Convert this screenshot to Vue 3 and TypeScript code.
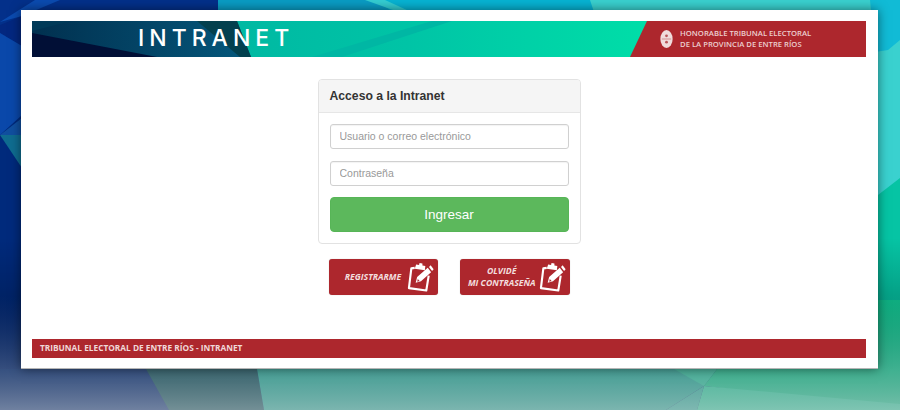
<script setup lang="ts">
const bgShapes = [
  { points: '0,0 900,0 900,410 0,410', fill: '#002a7c' },
  { points: '0,0 220,0 218,30 22,30 0,38', fill: '#03308a' },
  { points: '0,22 35,0 60,0 22,16', fill: '#0b4bb0' },
  { points: '0,25 22,16 22,46 0,33', fill: '#03277f' },
  { points: '0,33 22,46 22,115 0,135', fill: '#0a48aa' },
  { points: '0,135 22,118 22,135', fill: '#104f9f' },
  { points: '0,135 22,135 22,168', fill: '#0f6c90' },
  { points: '218,0 380,0 420,30 218,30', fill: '#0a9cc4' },
  { points: '375,0 595,0 600,30 420,30', fill: '#07b3d3' },
  { points: '365,0 385,0 420,16 410,16', fill: '#34cdd2' },
  { points: '590,0 900,0 900,200 878,220 878,30 600,30', fill: '#3ad1cf' },
  { points: '870,0 900,0 900,40 888,50 875,52', fill: '#11bbd6' },
  { points: '878,195 900,178 900,300 878,300', fill: '#06c4a4' },
  { points: '878,300 900,300 900,410 878,410', fill: '#10d49c' },
  { points: '0,369 146,369 169,410 0,410', fill: '#002e80' },
  { points: '146,369 257,369 264,410 169,410', fill: '#0a5566' },
  { points: '257,369 717,369 704,386 666,410 264,410', fill: '#1fb8a8' },
  { points: '704,386 697,410 666,410', fill: '#28bfae' },
  { points: '674,369 704,386 717,369', fill: '#25d4ae' },
  { points: '717,369 900,369 900,410 704,386', fill: '#10d49c' },
  { points: '704,386 900,404 900,410 697,410', fill: '#28e0b0' },
]

const footerText = 'TRIBUNAL ELECTORAL DE ENTRE RÍOS - INTRANET'
</script>

<template>
  <div class="page">
    <svg class="backdrop" viewBox="0 0 900 410" aria-hidden="true">
      <defs>
        <linearGradient id="fade" x1="0" y1="0" x2="0" y2="1">
          <stop offset="0.58" stop-color="#000" stop-opacity="0" />
          <stop offset="0.72" stop-color="#000" stop-opacity="0.18" />
          <stop offset="0.9" stop-color="#808080" stop-opacity="0.42" />
          <stop offset="1" stop-color="#b4b4b4" stop-opacity="0.62" />
        </linearGradient>
      </defs>
      <polygon v-for="(s, i) in bgShapes" :key="i" :points="s.points" :fill="s.fill" />
      <rect width="900" height="410" fill="url(#fade)" />
    </svg>

    <main class="sheet">
      <header class="banner">
        <svg class="banner-art" viewBox="0 0 834 36" preserveAspectRatio="none" aria-hidden="true">
          <defs>
            <linearGradient id="mint" x1="0" y1="0" x2="1" y2="0">
              <stop offset="0" stop-color="#00ab9e" />
              <stop offset="0.45" stop-color="#00c4a6" />
              <stop offset="0.75" stop-color="#00dfa8" />
              <stop offset="1" stop-color="#00d496" />
            </linearGradient>
            <linearGradient id="navy" x1="0" y1="0" x2="1" y2="0">
              <stop offset="0" stop-color="#01304f" />
              <stop offset="1" stop-color="#05587c" />
            </linearGradient>
          </defs>
          <rect width="834" height="36" fill="url(#mint)" />
          <polygon points="280,36 400,0 420,0 310,36" fill="#00b7a4" />
          <polygon points="0,0 205,0 219,36 0,36" fill="url(#navy)" />
          <polygon points="0,12 125,36 0,36" fill="#010f36" />
          <polygon points="0,0 40,0 0,10" fill="#013a58" />
          <polygon points="165,0 205,0 219,36 208,36" fill="#03404e" />
        </svg>
        <h1 class="brand">INTRANET</h1>
        <div class="court">
          <svg class="seal" viewBox="0 0 14 20" aria-hidden="true">
            <ellipse cx="7" cy="10" rx="6.6" ry="9.6" fill="#f0dcdc" />
            <circle cx="7" cy="6.6" r="1.5" fill="#b9575b" />
            <circle cx="7" cy="13.4" r="1.5" fill="#b9575b" />
            <rect x="2" y="9.7" width="10" height="0.6" fill="#b9575b" />
          </svg>
          <p>HONORABLE TRIBUNAL ELECTORAL<br />DE LA PROVINCIA DE ENTRE RÍOS</p>
        </div>
      </header>

      <section class="panel">
        <h2>Acceso a la Intranet</h2>
        <form class="fields" @submit.prevent>
          <input type="text" placeholder="Usuario o correo electrónico" />
          <input type="password" placeholder="Contraseña" />
          <button type="submit" class="enter">Ingresar</button>
        </form>
      </section>

      <nav class="links">
        <a class="link" href="#">
          <span>REGISTRARME</span>
          <svg class="pad" viewBox="0 0 28 32" aria-hidden="true">
            <path d="M8 6 L4.5 6.5 L2 27 L20 29.5 L22.5 14" fill="none" stroke="#fff" stroke-width="2.2" stroke-linejoin="round" />
            <path d="M8 7 L9.5 2.5 L12.5 3 L13 1 L16 1.4 L16 3.5 L19 4 L18.5 8.5 Z" fill="#fff" />
            <path d="M9 21.5 L10.5 15.5 L21.5 6 L25 10.5 L14.5 20 Z" fill="#fff" />
            <path d="M22.8 5 L24.5 3.4 L27.6 7.4 L26 9.2 Z" fill="#fff" />
            <path d="M10.6 20.4 L11.2 17.6 L13 19.6 Z" fill="#ad272d" />
          </svg>
        </a>
        <a class="link" href="#">
          <span>OLVIDÉ<br />MI CONTRASEÑA</span>
          <svg class="pad" viewBox="0 0 28 32" aria-hidden="true">
            <path d="M8 6 L4.5 6.5 L2 27 L20 29.5 L22.5 14" fill="none" stroke="#fff" stroke-width="2.2" stroke-linejoin="round" />
            <path d="M8 7 L9.5 2.5 L12.5 3 L13 1 L16 1.4 L16 3.5 L19 4 L18.5 8.5 Z" fill="#fff" />
            <path d="M9 21.5 L10.5 15.5 L21.5 6 L25 10.5 L14.5 20 Z" fill="#fff" />
            <path d="M22.8 5 L24.5 3.4 L27.6 7.4 L26 9.2 Z" fill="#fff" />
            <path d="M10.6 20.4 L11.2 17.6 L13 19.6 Z" fill="#ad272d" />
          </svg>
        </a>
      </nav>

      <footer class="foot">{{ footerText }}</footer>
    </main>
  </div>
</template>

<style>
html, body { margin: 0; background: #002a7c; }
</style>

<style scoped>
.page{position:relative;width:900px;height:410px;overflow:hidden;padding:10px 22px 41px 21px;box-sizing:border-box;font-family:"Liberation Sans",Arial,sans-serif;}
.backdrop{position:absolute;inset:0;width:900px;height:410px;}
.sheet{position:relative;height:359px;box-sizing:border-box;background:#fff;padding:11px 12px 10px 11px;display:flex;flex-direction:column;align-items:center;box-shadow:0 0 10px rgba(0,0,0,.5);border-bottom:1px solid #b5b5b5;}
.banner{position:relative;width:100%;height:36px;flex:none;display:flex;align-items:center;justify-content:space-between;overflow:hidden;}
.banner-art{position:absolute;inset:0;width:100%;height:100%;}
.brand{position:relative;margin:0 0 1px 106px;font:500 23px/1 Inter,"Noto Sans",sans-serif;letter-spacing:5px;color:#fff;}
.court{position:relative;align-self:stretch;width:236px;box-sizing:border-box;background:#ad272d;clip-path:polygon(17px 0,100% 0,100% 100%,0 100%);display:flex;align-items:center;gap:7px;padding-left:30px;}
.seal{width:13px;height:20px;flex:none;}
.court p{margin:0;font:600 7.7px/11px "Open Sans",sans-serif;color:#eccfcf;white-space:nowrap;}
.panel{margin-top:22px;width:263px;height:165px;flex:none;box-sizing:border-box;border:1px solid #e2e2e2;border-radius:4px;overflow:hidden;}
.panel h2{margin:0;height:33px;box-sizing:border-box;padding:0 11px;background:#f5f5f5;border-bottom:1px solid #e6e6e6;font-size:12.2px;font-weight:700;line-height:32px;color:#333;}
.fields{display:flex;flex-direction:column;padding:11px;}
.fields input{height:25px;box-sizing:border-box;border:1px solid #d0d0d0;border-radius:3px;padding:0 9px 1px;margin:0 0 12px;font:10.5px "Liberation Sans",Arial,sans-serif;color:#555;background:#fff;outline:none;box-shadow:inset 0 1px 1px rgba(0,0,0,.05);}
.fields input::placeholder{color:#999;opacity:1;}
.fields input:last-of-type{margin-bottom:11px;}
.enter{height:35px;border:1px solid #57b557;border-radius:4px;background:#5cb85c;color:#fff;font:13.5px "Liberation Sans",Arial,sans-serif;padding:0;}
.links{display:flex;gap:22px;margin-top:15px;margin-left:0;}
.link{width:109px;height:36px;box-sizing:border-box;background:#ad272d;border-radius:3px;display:flex;align-items:center;justify-content:flex-end;gap:3px;padding-right:4px;text-decoration:none;color:#f3dede;box-shadow:0 0 1px rgba(0,0,0,.3);}
.link + .link{width:110px;}
.link span{flex:1;text-align:center;font:italic 700 8.7px/12px "Open Sans",sans-serif;padding-left:14px;white-space:nowrap;}
.pad{width:27px;height:31px;flex:none;}
.foot{margin-top:auto;width:100%;height:19px;flex:none;box-sizing:border-box;background:#ad272d;padding-left:8px;font:700 8.3px/18px "Open Sans",sans-serif;color:#f0d8d8;}
</style>
